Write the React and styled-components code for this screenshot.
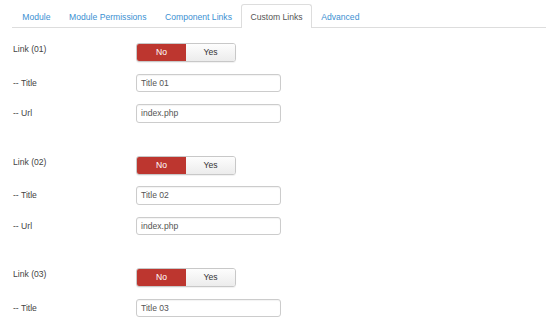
import React from "react";
import styled, { createGlobalStyle } from "styled-components";

const Global = createGlobalStyle`
  html, body { margin: 0; padding: 0; background: #fff; overflow: hidden; }
  body { font-family: "Liberation Sans", Arial, sans-serif; font-size: 8.6px; color: #333; }
`;

const Page = styled.div`
  width: 546px;
  height: 328px;
  overflow: hidden;
  padding-top: 4px;
  box-sizing: border-box;
`;

const TabBar = styled.ul`
  list-style: none;
  margin: 0 0 0 12px;
  padding: 0 0 0 1px;
  display: flex;
  border-bottom: 1px solid #ddd;
  height: 23px;
`;

const Tab = styled.li`
  padding: 0 8.3px;
  line-height: 24px;
  box-sizing: border-box;
  color: ${(p) => (p.$active ? "#555" : "#3b90d2")};
  background: ${(p) => (p.$active ? "#fff" : "transparent")};
  border: 1px solid ${(p) => (p.$active ? "#ddd" : "transparent")};
  border-bottom: none;
  border-radius: 3px 3px 0 0;
  height: ${(p) => (p.$active ? "24px" : "23px")};
  white-space: nowrap;
`;

const Content = styled.div`
  padding: 15px 0 0 13px;
  display: flex;
  flex-direction: column;
  gap: 32.2px;
`;

const Group = styled.div`
  display: flex;
  flex-direction: column;
  gap: 11px;
`;

const Row = styled.div`
  display: flex;
  align-items: flex-start;
  height: 19.5px;
`;

const Label = styled.div`
  width: 123px;
  line-height: ${(p) => (p.$compact ? "12px" : "18px")};
  color: #444;
`;

const Toggle = styled.div`
  display: flex;
  width: 100px;
  height: 19px;
  border: 1px solid #c8c8c8;
  border-radius: 3px;
  box-sizing: border-box;
  overflow: hidden;
  box-shadow: 0 1px 1px rgba(0, 0, 0, 0.06);
`;

const ToggleBtn = styled.div`
  flex: 1;
  text-align: center;
  line-height: 17px;
  color: ${(p) => (p.$on ? "#fff" : "#333")};
  background: ${(p) =>
    p.$on ? "#bd362f" : "linear-gradient(#fdfdfd, #ececec)"};
`;

const Input = styled.div`
  width: 145px;
  height: 18.5px;
  border: 1px solid #ccc;
  border-radius: 3px;
  box-sizing: border-box;
  padding-left: 4px;
  line-height: 17px;
  color: #555;
  background: #fff;
  box-shadow: inset 0 1px 1px rgba(0, 0, 0, 0.05);
`;

const tabs = ["Module", "Module Permissions", "Component Links", "Custom Links", "Advanced"];
const links = [
  { n: "01", url: true },
  { n: "02", url: true },
  { n: "03", url: false },
];

export default function App() {
  return (
    <Page>
      <Global />
      <TabBar>
        {tabs.map((t) => (
          <Tab key={t} $active={t === "Custom Links"}>{t}</Tab>
        ))}
      </TabBar>
      <Content>
        {links.map(({ n, url }) => (
          <Group key={n}>
            <Row>
              <Label $compact>Link ({n})</Label>
              <Toggle>
                <ToggleBtn $on>No</ToggleBtn>
                <ToggleBtn>Yes</ToggleBtn>
              </Toggle>
            </Row>
            <Row>
              <Label>-- Title</Label>
              <Input>Title {n}</Input>
            </Row>
            {url && (
              <Row>
                <Label>-- Url</Label>
                <Input>index.php</Input>
              </Row>
            )}
          </Group>
        ))}
      </Content>
    </Page>
  );
}
